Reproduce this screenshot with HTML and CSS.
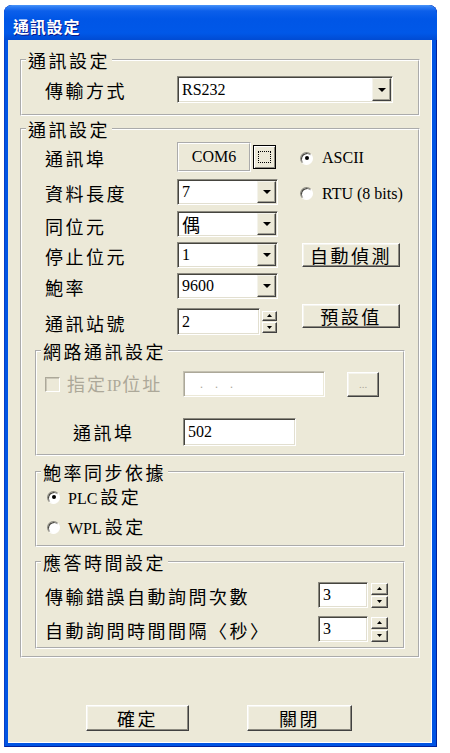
FILE: index.html
```html
<!DOCTYPE html>
<html lang="zh-Hant">
<head>
  <meta charset="UTF-8" />
  <meta name="viewport" content="width=device-width, initial-scale=1" />
  <title>通訊設定</title>
  <link rel="stylesheet" href="styles.css">
</head>
<body>

<div class="window">
  <div class="titlebar"><span class="title">通訊設定</span></div>

  <div class="client">
    <!-- 傳輸方式 -->
    <fieldset class="group group-top">
      <legend>通訊設定</legend>
      <div class="transfer-row">
        <span class="label">傳輸方式</span>
        <div class="combo combo-wide">
          <span class="combo-value en">RS232</span>
          <span class="combo-drop"><svg width="8" height="4" viewBox="0 0 8 4"><path d="M0 0h8L4 4z"/></svg></span>
        </div>
      </div>
    </fieldset>

    <!-- 通訊參數 -->
    <fieldset class="group group-comm">
      <legend>通訊設定</legend>
      <div class="group-body">
        <div class="port-grid">
          <span class="label">通訊埠</span>
          <div class="port-cell">
            <span class="port-box en">COM6</span>
            <button class="btn-browse"><span></span></button>
          </div>
          <span></span>
          <label class="opt"><span class="radio on"></span><span class="en">ASCII</span></label>

          <span class="label">資料長度</span>
          <div class="combo combo-short">
            <span class="combo-value en">7</span>
            <span class="combo-drop"><svg width="8" height="4" viewBox="0 0 8 4"><path d="M0 0h8L4 4z"/></svg></span>
          </div>
          <span></span>
          <label class="opt"><span class="radio"></span><span class="en">RTU (8 bits)</span></label>

          <span class="label">同位元</span>
          <div class="combo combo-short">
            <span class="combo-value cjk">偶</span>
            <span class="combo-drop"><svg width="8" height="4" viewBox="0 0 8 4"><path d="M0 0h8L4 4z"/></svg></span>
          </div>
          <span></span>
          <span></span>

          <span class="label">停止位元</span>
          <div class="combo combo-short">
            <span class="combo-value en">1</span>
            <span class="combo-drop"><svg width="8" height="4" viewBox="0 0 8 4"><path d="M0 0h8L4 4z"/></svg></span>
          </div>
          <span></span>
          <button class="btn btn-side">自動偵測</button>

          <span class="label">鮑率</span>
          <div class="combo combo-short">
            <span class="combo-value en">9600</span>
            <span class="combo-drop"><svg width="8" height="4" viewBox="0 0 8 4"><path d="M0 0h8L4 4z"/></svg></span>
          </div>
          <span></span>
          <span></span>

          <span class="label label-last">通訊站號</span>
          <div class="spin-cell station">
            <span class="field en">2</span>
            <span class="spin">
              <span class="spin-btn"><svg width="5" height="3" viewBox="0 0 5 3"><path d="M2.5 0L5 3H0z"/></svg></span>
              <span class="spin-btn"><svg width="5" height="3" viewBox="0 0 5 3"><path d="M0 0h5L2.5 3z"/></svg></span>
            </span>
          </div>
          <span></span>
          <button class="btn btn-side btn-default-value">預設值</button>
        </div>

        <fieldset class="group group-net">
          <legend>網路通訊設定</legend>
          <div class="net-body">
            <div class="net-row">
              <label class="check-wrap"><span class="check"></span><span class="check-text">指定<span class="en">IP</span>位址</span></label>
              <span class="field field-ip en"><span class="ip-dots">...</span></span>
              <button class="btn btn-dots" disabled>...</button>
            </div>
            <div class="net-row net-row-port">
              <span class="label net-label">通訊埠</span>
              <span class="field field-port en">502</span>
            </div>
          </div>
        </fieldset>

        <fieldset class="group group-baud">
          <legend>鮑率同步依據</legend>
          <div class="baud-body">
            <label class="opt baud-opt"><span class="radio on"></span><span class="opt-text"><span class="en">PLC</span>設定</span></label>
            <label class="opt baud-opt"><span class="radio"></span><span class="opt-text"><span class="en">WPL</span>設定</span></label>
          </div>
        </fieldset>

        <fieldset class="group group-time">
          <legend>應答時間設定</legend>
          <div class="time-body">
            <div class="time-row">
              <span class="label time-label">傳輸錯誤自動詢問次數</span>
              <span class="field field-num en">3</span>
              <span class="spin spin-tall">
                <span class="spin-btn"><svg width="5" height="3" viewBox="0 0 5 3"><path d="M2.5 0L5 3H0z"/></svg></span>
                <span class="spin-btn"><svg width="5" height="3" viewBox="0 0 5 3"><path d="M0 0h5L2.5 3z"/></svg></span>
              </span>
            </div>
            <div class="time-row">
              <span class="label time-label">自動詢問時間間隔〈秒〉</span>
              <span class="field field-num en">3</span>
              <span class="spin spin-tall">
                <span class="spin-btn"><svg width="5" height="3" viewBox="0 0 5 3"><path d="M2.5 0L5 3H0z"/></svg></span>
                <span class="spin-btn"><svg width="5" height="3" viewBox="0 0 5 3"><path d="M0 0h5L2.5 3z"/></svg></span>
              </span>
            </div>
          </div>
        </fieldset>
      </div>
    </fieldset>

    <div class="actions">
      <button class="btn btn-ok">確定</button>
      <button class="btn btn-close">關閉</button>
    </div>
  </div>
</div>

</body>
</html>
```

FILE: styles.css
```css
* {
  box-sizing: border-box;
}
body {
  margin: 0;
  background: #fff;
  font-family: "Noto Sans CJK TC", sans-serif;
  color: #000;
}
.en {
  font-family: "Liberation Serif", serif;
  font-size: 16px;
  letter-spacing: 0;
}
.cjk {
  font-family: "Noto Sans CJK TC", sans-serif;
  font-size: 18px;
}

/* window frame */
.window {
  width: 433px;
  height: 742px;
  margin: 5px 0 0 4px;
  padding-bottom: 4px;
  background: #0054e3;
  border-radius: 8px 8px 0 0;
  box-shadow: inset 1px 0 #0a3fc4, inset -1px 0 #00209c, inset 0 -1px #00209c;
  display: flex;
  flex-direction: column;
  overflow: hidden;
}
.titlebar {
  height: 35px;
  flex: none;
  padding: 9px 0 0 9px;
  border-radius: 8px 8px 0 0;
  background: linear-gradient(#4a95f8 0, #2d7cf3 2px, #0c5fea 6px, #0056e6 40%, #0058e8 80%, #004bd3 100%);
}
.title {
  color: #fff;
  font-weight: 700;
  font-size: 16px;
  line-height: 20px;
  letter-spacing: 0.8px;
  text-shadow: 1px 1px #0c1a8a;
}
.client {
  flex: 1;
  margin: 0 5px 0 4px;
  padding-top: 10px;
  background: #ece9d8;
  box-shadow: inset -1px -1px #fff;
}

/* group boxes */
.group {
  margin: 0;
  padding: 0;
  min-width: 0;
  border: 2px groove #fff;
}
.group legend {
  margin-left: 4px;
  padding: 0 2px;
  font-size: 18px;
  line-height: 20px;
  letter-spacing: 2.5px;
}
.label {
  font-size: 18px;
  line-height: 20px;
  letter-spacing: 2.5px;
  white-space: nowrap;
}
.group-top {
  margin: 0 12px;
}
.transfer-row {
  display: flex;
  align-items: center;
  padding: 6px 0 11px 23px;
}
.transfer-row .label {
  width: 132px;
}
.group-comm {
  margin: 3px 12px 0;
}
.group-body {
  padding: 0 13px 7px;
}

/* sunken fields */
.combo,
.field {
  display: flex;
  align-items: center;
  background: #fff;
  border: 1px solid;
  border-color: #8c8a80 #fff #fff #8c8a80;
  padding: 1px;
  box-shadow: inset 1px 1px #45443e, inset -1px -1px #e2dfd0;
}
.combo-value {
  flex: 1;
  padding-left: 3px;
  line-height: 20px;
}
.combo-drop {
  width: 19px;
  align-self: stretch;
  display: flex;
  align-items: center;
  justify-content: center;
  background: #ece9d8;
  border: 1px solid;
  border-color: #f4f3ec #404040 #404040 #f4f3ec;
  box-shadow: inset -1px -1px #a19f92;
}
.combo-wide {
  width: 216px;
  height: 27px;
}
.combo-short {
  width: 101px;
  height: 26px;
}
.field {
  padding-left: 4px;
}

/* raised buttons */
.btn {
  font-family: "Noto Sans CJK TC", sans-serif;
  font-size: 18px;
  line-height: 20px;
  letter-spacing: 2.5px;
  color: #000;
  padding: 0;
  background: #ece9d8;
  border: 1px solid;
  border-color: #fff #404040 #404040 #fff;
  box-shadow: inset -1px -1px #8c8a80, inset 1px 1px #f5f4ee;
  display: flex;
  align-items: center;
  justify-content: center;
}

/* communication grid */
.port-grid {
  display: grid;
  grid-template-columns: 142px 101px 22px 1fr;
  grid-template-rows: 34px 37px 28px 33px 29px 38px;
  align-items: center;
}
.port-grid .label {
  padding-left: 10px;
  margin-top: 3px;
}
.port-grid .label-last {
  margin-top: 8px;
}
.port-cell {
  display: flex;
  align-items: center;
  gap: 2px;
  margin-top: 2px;
}
.port-box {
  width: 74px;
  height: 30px;
  display: flex;
  align-items: center;
  justify-content: center;
  border: 2px groove #fff;
}
.btn-browse {
  width: 23px;
  height: 24px;
  padding: 0;
  background: #ece9d8;
  border: 1px solid #000;
  box-shadow: inset 1px 1px #fff, inset -1px -1px #8c8a80;
  display: flex;
  align-items: center;
  justify-content: center;
}
.btn-browse span {
  width: 13px;
  height: 12px;
  border: 1px dotted #000;
}
.opt {
  display: flex;
  align-items: center;
  gap: 9px;
  margin-top: 4px;
}
.radio {
  width: 13px;
  height: 13px;
  flex: none;
  border-radius: 50%;
  background: #fff;
  border: 1px solid;
  border-color: #8c8a80 #fff #fff #8c8a80;
  box-shadow: inset 1px 1px #45443e;
  display: flex;
  align-items: center;
  justify-content: center;
}
.radio.on::after {
  content: "";
  width: 4px;
  height: 4px;
  border-radius: 50%;
  background: #000;
}
.btn-side {
  width: 98px;
  height: 24px;
  margin-left: 2px;
}
.btn-default-value {
  align-self: start;
  margin-top: 4px;
}
.spin-cell {
  display: flex;
  align-items: center;
  gap: 2px;
}
.station {
  align-self: start;
  margin-top: 8px;
}
.station .field {
  width: 83px;
  height: 27px;
}
.spin {
  width: 15px;
  height: 22px;
  display: flex;
  flex-direction: column;
  gap: 1px;
}
.spin-btn {
  flex: 1;
  display: flex;
  align-items: center;
  justify-content: center;
  background: #ece9d8;
  border: 1px solid;
  border-color: #fff #404040 #404040 #fff;
  box-shadow: inset -1px -1px #8c8a80;
}

/* network group */
.group-net {
  margin-top: 3px;
}
.net-body {
  padding: 10px 0 8px 8px;
}
.net-row {
  display: flex;
  align-items: center;
  height: 26px;
}
.net-row-port {
  margin-top: 21px;
  height: 28px;
}
.check-wrap {
  width: 138px;
  flex: none;
  display: flex;
  align-items: center;
  gap: 7px;
  color: #aca899;
}
.check-text {
  font-size: 18px;
  line-height: 20px;
  letter-spacing: 2px;
  white-space: nowrap;
}
.check-text .en {
  margin-right: 1px;
}
.check {
  width: 15px;
  height: 15px;
  flex: none;
  border: 1px solid;
  border-color: #aca899 #fff #fff #aca899;
  box-shadow: inset 1px 1px #cbc7b8;
  background: #ece9d8;
}
.field-ip {
  width: 142px;
  height: 26px;
  flex: none;
  border-color: #c4c1b2 #fff #fff #c4c1b2;
  box-shadow: inset 1px 1px #aca899, inset -1px -1px #ece9d8;
}
.ip-dots {
  padding-left: 12px;
  color: #aca899;
  font-size: 12px;
  letter-spacing: 12px;
}
.btn-dots {
  width: 32px;
  height: 25px;
  flex: none;
  margin-left: 22px;
  font-family: "Liberation Serif", serif;
  font-size: 11px;
  letter-spacing: 0;
  color: #aca899;
}
.net-label {
  width: 110px;
  margin-left: 28px;
}
.field-port {
  width: 113px;
  height: 28px;
}

/* baud group */
.group-baud {
  margin-top: 6px;
}
.baud-body {
  padding: 2px 0 5px 10px;
  display: flex;
  flex-direction: column;
  gap: 4px;
}
.baud-opt {
  height: 26px;
  margin: 0;
  gap: 8px;
}
.opt-text {
  font-size: 18px;
  line-height: 20px;
  letter-spacing: 2.5px;
  white-space: nowrap;
}
.opt-text .en {
  margin-right: 3px;
}

/* response time group */
.group-time {
  margin-top: 5px;
}
.time-body {
  padding: 10px 0 5px 8px;
  display: flex;
  flex-direction: column;
  gap: 8px;
}
.time-row {
  display: flex;
  align-items: center;
  height: 26px;
}
.time-label {
  width: 273px;
  margin-top: 2px;
}
.field-num {
  width: 50px;
  height: 26px;
}
.spin-tall {
  width: 17px;
  height: 25px;
  margin-left: 3px;
}

/* bottom buttons */
.actions {
  display: flex;
  gap: 58px;
  margin-top: 47px;
  padding-left: 78px;
}
.btn-ok {
  width: 103px;
  height: 26px;
}
.btn-close {
  width: 105px;
  height: 26px;
}
```
